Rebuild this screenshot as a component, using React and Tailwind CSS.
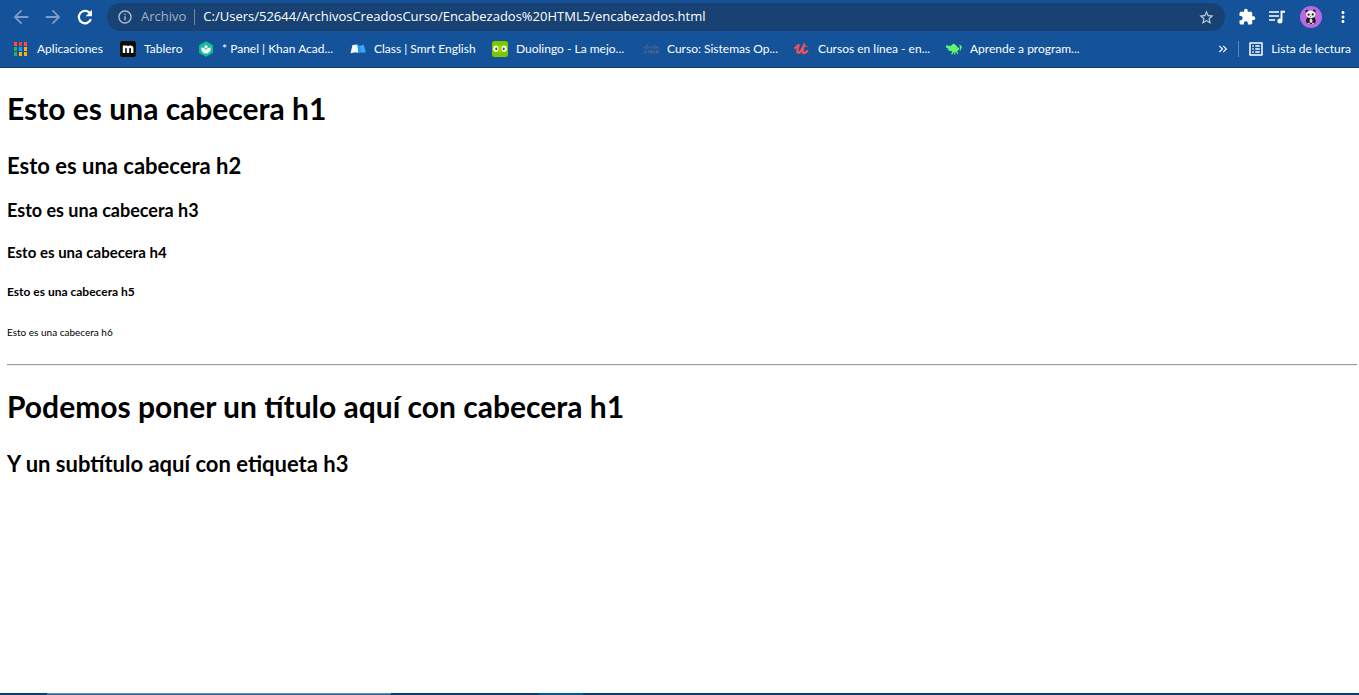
import {
  MdArrowBack,
  MdArrowForward,
  MdExtension,
  MdInfoOutline,
  MdKeyboardDoubleArrowRight,
  MdMoreVert,
  MdOutlineListAlt,
  MdStarBorder,
} from 'react-icons/md';

function ReloadIcon() {
  return (
    <svg className="size-[18px]" viewBox="0 0 18 18" aria-hidden="true">
      <path d="M14.900 11.200A6.200 6.200 0 1 1 13.400 4.600" fill="none" stroke="#fff" strokeWidth="2.200" />
      <path d="M16 1.800v6.400H9.600Z" fill="#fff" />
    </svg>
  );
}

function MusicQueueIcon() {
  return (
    <svg className="size-[18px]" viewBox="0 0 18 18" aria-hidden="true">
      <path d="M1 4h10M1 8h10M1 12h6" stroke="#fff" strokeWidth="1.700" />
      <path d="M13.500 12.500V3.800h3.500" fill="none" stroke="#fff" strokeWidth="1.900" />
      <circle cx="11.900" cy="13" r="2.500" fill="#fff" />
    </svg>
  );
}

function AppsIcon() {
  const rows = [
    ['#ff4a3d', '#ff3b30', '#ff4a3d'],
    ['#2fae5a', '#2196f3', '#ffb300'],
    ['#2fae5a', '#ffb300', '#ffb300'],
  ];
  return (
    <svg className="size-4 shrink-0" viewBox="0 0 16 16" aria-hidden="true">
      {rows.map((row, y) =>
        row.map((fill, x) => (
          <rect key={`${x}-${y}`} x={1 + x * 5} y={1 + y * 5} width="3" height="4" fill={fill} />
        )),
      )}
    </svg>
  );
}

function BoardIcon() {
  return (
    <svg className="size-4 shrink-0" viewBox="0 0 16 16" aria-hidden="true">
      <rect width="16" height="16" rx="2.500" fill="#0d0d0d" />
      <path
        d="M4 12V4.500M4 7.200c0-2 4-2 4 0V12M8 7.200c0-2 4.200-2 4.200 0V12"
        fill="none"
        stroke="#fff"
        strokeWidth="2.400"
      />
    </svg>
  );
}

function KhanIcon() {
  return (
    <svg className="size-4 shrink-0" viewBox="0 0 16 16" aria-hidden="true">
      <path d="M8 .2 14.3 3.7a1 1 0 0 1 .6.9v6.8a1 1 0 0 1-.6.9L8 15.8l-6.300-3.500a1 1 0 0 1-.6-.9V4.600a1 1 0 0 1 .6-.9Z" fill="#14bf96" />
      <circle cx="8" cy="5.800" r="1.600" fill="#fff" />
      <path d="M3.200 6.500c2.500 0 4.300 1.300 4.800 3 .5-1.700 2.300-3 4.800-3 0 3.600-1.700 6-4.800 6s-4.800-2.400-4.800-6Z" fill="#fff" />
    </svg>
  );
}

function SmrtIcon() {
  return (
    <svg className="size-4 shrink-0" viewBox="0 0 16 16" aria-hidden="true">
      <path d="M2.500 4 7.500 3.500 8.500 12l-3-.8-5 1Z" fill="#f3f8ff" />
      <path d="M7.500 3.500 10 5l3.500-1.200 2.300 7.400-4.500.3-2.800.5Z" fill="#2196f3" />
      <path d="m10 5 3.500-1.200 2.300 7.400-4.500.3Z" fill="#3ea4fb" />
    </svg>
  );
}

function DuolingoIcon() {
  return (
    <svg className="size-4 shrink-0" viewBox="0 0 16 16" aria-hidden="true">
      <rect width="16" height="16" rx="2.500" fill="#78c800" />
      <path d="M1 5c2-1.800 5-1.500 7 .6C10 3.500 13 3.200 15 5v4c-1.500 2.500-5 2.500-7 1-2 1.500-5.500 1.500-7-1Z" fill="#8ee000" />
      <rect x="1.300" y="4.800" width="5" height="6" rx="2.400" fill="#fff" />
      <rect x="9.700" y="4.800" width="5" height="6" rx="2.400" fill="#fff" />
      <rect x="3.300" y="6.500" width="2" height="2.800" rx="1" fill="#4b4b4b" />
      <rect x="10.700" y="6.500" width="2" height="2.800" rx="1" fill="#4b4b4b" />
      <path d="M6.300 9.800c1-.8 2.400-.8 3.400 0L8 12.300Z" fill="#ff9600" />
    </svg>
  );
}

function CiscoIcon() {
  return (
    <svg className="size-4 shrink-0" viewBox="0 0 16 16" aria-hidden="true">
      <g stroke="#43658c" strokeWidth="1.300" fill="none">
        <path d="M.8 6v1.500M2.600 4.800v2.700M4.400 3.600v4.400M6.200 4.800v2.700M8 6v1.500M9.800 4.800v2.700M11.600 3.600v4.400M13.400 4.800v2.700M15.200 6v1.500" />
        <path d="M4 9.800H2.200v2H4M5.500 9.300v3M9 9.800H7.200v.8h1.500v1.200H7M12 9.800h-1.700v2H12M13.400 9.800h1.800v2h-1.800Z" />
      </g>
    </svg>
  );
}

function UdemyIcon() {
  return (
    <svg className="size-4 shrink-0" viewBox="0 0 16 16" aria-hidden="true">
      <path
        d="M1.200 7C2.500 6 3.400 4.800 4.700 4 4.100 6.200 2.800 9.500 3.500 11.500c1.200 1.300 3.400-1 4.900-4.200M10.300 3.300C9.500 6 8 10 9 11.800c1.300 1 3-.4 4.300-1.800"
        fill="none"
        stroke="#f0525a"
        strokeWidth="2.200"
        strokeLinecap="round"
        strokeLinejoin="round"
      />
      <path d="m8 5.800 5-.6" stroke="#f0525a" strokeWidth="1.100" strokeLinecap="round" />
    </svg>
  );
}

function BugIcon() {
  return (
    <svg className="size-4 shrink-0" viewBox="0 0 16 16" aria-hidden="true">
      <path
        d="M0 4.300 4.500 5 7.500 2.500l2.800 2 1.200 1.800c1.400.2 1.700 1.200 1.500 2.200l-1.800 1.900L12.500 13h-1.100L9.700 10.600l-.5 2.900H8.100l.2-2.900-2 2.900H5.100l1.200-3.200-2.500-.2L1.300 8.700 3 7.900 0 6.500Z"
        fill="#62f46b"
      />
      <path d="M13 3.400c2 .2 3 2 2.800 3.600-.8.300-1.500 1.500-.8 2.900l-1.200-.7c-.5-1.800.8-3.800-.8-5.800Z" fill="#62f46b" />
    </svg>
  );
}

function PandaAvatar() {
  return (
    <svg className="size-[22px]" viewBox="0 0 22 22" aria-hidden="true">
      <circle cx="11" cy="11" r="11" fill="#b968df" />
      <path d="M7.300 11.500c-1.600 2-1.600 5.500.2 6.500h7c1.800-1.500 1.300-5-.3-6.800Z" fill="#1d1720" />
      <ellipse cx="11" cy="14.800" rx="1.500" ry="2.200" fill="#ddd" />
      <circle cx="7" cy="5.300" r="1.500" fill="#1d1720" />
      <circle cx="14.200" cy="4.900" r="1.500" fill="#1d1720" />
      <ellipse cx="10.700" cy="8.300" rx="4.700" ry="3.900" fill="#f3f0ec" />
      <ellipse cx="8.600" cy="8.600" rx="1" ry="1.200" fill="#1d1720" />
      <ellipse cx="12.700" cy="8.400" rx="1" ry="1.200" fill="#1d1720" />
      <path d="M10 10.200h1.400l-.7.800Z" fill="#1d1720" />
      <path d="M7.500 17.300h2.300M12 17.300h2.400" stroke="#eee" strokeWidth="1" />
    </svg>
  );
}

const bookmarks = [
  { label: 'Aplicaciones', Icon: AppsIcon, width: 'w-[91px]' },
  { label: 'Tablero', Icon: BoardIcon, width: 'w-[62px]' },
  { label: '* Panel | Khan Acad...', Icon: KhanIcon, width: 'w-[136px]' },
  { label: 'Class | Smrt English', Icon: SmrtIcon, width: 'w-[126px]' },
  { label: 'Duolingo - La mejo...', Icon: DuolingoIcon, width: 'w-[135px]' },
  { label: 'Curso: Sistemas Op...', Icon: CiscoIcon, width: 'w-[135px]' },
  { label: 'Cursos en línea - en...', Icon: UdemyIcon, width: 'w-[136px]' },
  { label: 'Aprende a program...', Icon: BugIcon, width: 'w-[136px]' },
];

function Toolbar() {
  return (
    <div className="flex h-[34px] items-center pl-2.5 pr-[7px]">
      <nav className="flex items-center gap-2.5" aria-label="Historial">
        <button type="button" aria-label="Atrás" className="text-[#7d9cc6]">
          <MdArrowBack className="size-[22px]" />
        </button>
        <button type="button" aria-label="Adelante" className="text-[#7d9cc6]">
          <MdArrowForward className="size-[22px]" />
        </button>
        <button type="button" aria-label="Volver a cargar" className="pl-0.5">
          <ReloadIcon />
        </button>
      </nav>
      <div className="ml-[13px] flex h-7 flex-1 items-center rounded-full bg-[#184273] px-2.5">
        <MdInfoOutline className="size-4 text-[#b4c0cf]" />
        <label htmlFor="address" className="ml-2 text-[13px] text-[#a3b3c7]">
          Archivo
        </label>
        <span className="mx-2 h-4 w-px bg-[#6f88a5]" />
        <input
          id="address"
          type="text"
          defaultValue="C:/Users/52644/ArchivosCreadosCurso/Encabezados%20HTML5/encabezados.html"
          className="min-w-0 flex-1 bg-transparent text-[13px] outline-none"
        />
        <button type="button" aria-label="Añadir a marcadores" className="text-[#c5cfdb]">
          <MdStarBorder className="size-[17px]" />
        </button>
      </div>
      <div className="ml-[13px] flex items-center gap-3">
        <button type="button" aria-label="Extensiones">
          <MdExtension className="size-[18px]" />
        </button>
        <button type="button" aria-label="Controlar la música" className="pr-0.5">
          <MusicQueueIcon />
        </button>
        <button type="button" aria-label="Perfil">
          <PandaAvatar />
        </button>
        <button type="button" aria-label="Menú">
          <MdMoreVert className="size-[18px]" />
        </button>
      </div>
    </div>
  );
}

function BookmarksBar() {
  return (
    <div className="flex h-[33px] items-center justify-between pb-1 pl-[13px] pr-2 font-['Lato',sans-serif] text-[12px]">
      <nav className="flex gap-4" aria-label="Marcadores">
        {bookmarks.map(({ label, Icon, width }) => (
          <a key={label} href="#" className={`flex items-center gap-2 whitespace-nowrap ${width}`}>
            <Icon />
            {label}
          </a>
        ))}
      </nav>
      <div className="flex items-center">
        <button type="button" aria-label="Más marcadores">
          <MdKeyboardDoubleArrowRight className="size-3.5" />
        </button>
        <span className="mx-2 h-4 w-px bg-[#5c87ba]" />
        <button type="button" className="flex items-center gap-1.5 whitespace-nowrap">
          <MdOutlineListAlt className="size-[18px]" />
          Lista de lectura
        </button>
      </div>
    </div>
  );
}

export default function App() {
  return (
    <div className="flex min-h-screen flex-col bg-white">
      <header className="border-b border-[#0b3a6e] bg-[#14529a] font-['Open_Sans','Noto_Sans',sans-serif] text-white">
        <Toolbar />
        <BookmarksBar />
      </header>
      <main className="flex-1 pl-[7px] pr-0.5 pt-5 font-['Lato',sans-serif] font-bold text-black">
        <h1 className="text-[30px] leading-10">Esto es una cabecera h1</h1>
        <h2 className="mt-6 text-[22px] leading-7">Esto es una cabecera h2</h2>
        <h3 className="mt-5 text-[18px] leading-5">Esto es una cabecera h3</h3>
        <h4 className="mt-[22px] text-[15px] leading-5">Esto es una cabecera h4</h4>
        <h5 className="mt-5 text-[12px] leading-5">Esto es una cabecera h5</h5>
        <h6 className="mt-5 text-[10px] font-normal leading-5">Esto es una cabecera h6</h6>
        <hr className="mt-[22px] border-t border-b border-t-[#9a9a9a] border-b-[#eeeeee]" />
        <h1 className="mt-5 text-[30px] leading-10">Podemos poner un título aquí con cabecera h1</h1>
        <h3 className="mt-6 text-[22px] leading-7">Y un subtítulo aquí con etiqueta h3</h3>
      </main>
      <footer className="flex h-0.5 bg-[#04407a]">
        <div className="ml-[47px] w-[344px] border-t border-[#5b8bb5] bg-[#2a659b]" />
        <div className="ml-[148px] w-11 bg-[#005a9e]" />
      </footer>
    </div>
  );
}
